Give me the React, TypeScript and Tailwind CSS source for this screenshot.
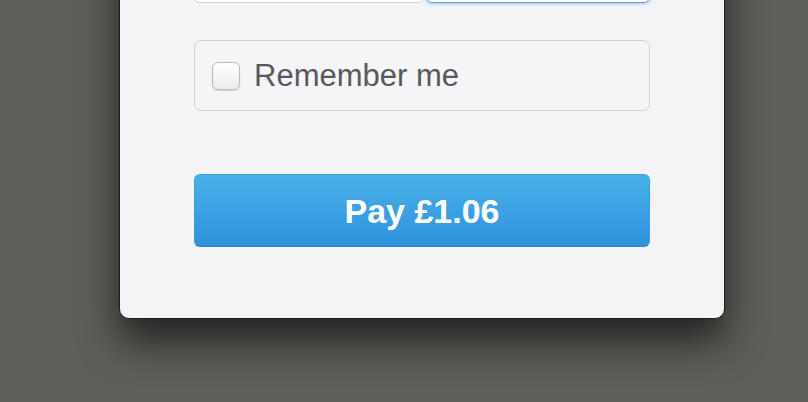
import React from "react";

export default function App() {
  return (
    <div className="h-[402px] w-[808px] overflow-hidden bg-[#5f5d59]" style={{ fontFamily: '"Liberation Sans", Arial, sans-serif' }}>
      <div className="ml-[119px] mt-[-60px] w-[606px] rounded-b-[10px] border border-[#1c1c1c] bg-[#f4f4f7] px-[74px] pb-[71px] shadow-[0_22px_38px_rgba(0,0,0,0.62)]">
        <div className="flex pt-[14px]">
          <div className="h-[48px] w-[230px] rounded-b-[5px] border border-[#d3d3d6] bg-white" />
          <div className="ml-[2px] h-[48px] flex-1 rounded-[6px] border border-[#6b9fdf] bg-white shadow-[0_0_4px_rgba(70,140,230,0.7)]" />
        </div>
        <div className="mt-[37px] flex h-[71px] items-center rounded-[7px] border border-[#d1d1d4] bg-[#f5f5f8] pl-[17px]">
          <div className="h-[28px] w-[28px] rounded-[6px] border border-[#b9b9bd] bg-gradient-to-b from-white to-[#ececef] shadow-[0_1px_1px_rgba(0,0,0,0.15)]" />
          <span className="ml-[14px] text-[31px] leading-none text-[#58585c]">Remember me</span>
        </div>
        <button className="mt-[63px] flex h-[73px] w-full items-center justify-center rounded-[6px] border border-[#3b9ce0] border-b-[#2a7fc6] bg-gradient-to-b from-[#48b1ea] to-[#2f92dc] text-[34px] font-bold leading-none text-white">
          Pay £1.06
        </button>
      </div>
    </div>
  );
}
